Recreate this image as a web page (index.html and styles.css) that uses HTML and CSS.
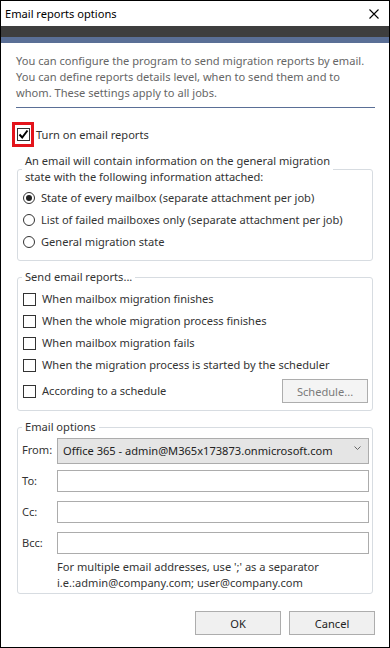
FILE: index.html
```html
<!DOCTYPE html>
<html lang="en">
<head>
    <meta charset="UTF-8">
    <meta name="viewport" content="width=device-width, initial-scale=1.0">
    <title>Email reports options</title>
    <link rel="stylesheet" href="styles.css">
</head>
<body>
    <div class="dialog">
        <div class="titlebar">
            <span>Email reports options</span>
            <svg class="close" width="10" height="10" viewBox="0 0 10 10">
                <path d="M0.5 0.5 L9.5 9.5 M9.5 0.5 L0.5 9.5" stroke="#000" stroke-width="1.1" fill="none"/>
            </svg>
        </div>
        <div class="banner"></div>
        <div class="content">
            <p class="intro">You can configure the program to send migration reports by email.<br>You can define reports details level, when to send them and to<br>whom. These settings apply to all jobs.</p>
            <hr class="sep">

            <label class="main-check">
                <span class="highlight">
                    <span class="box checked">
                        <svg width="11" height="11" viewBox="0 0 11 11">
                            <path d="M1.5 5.5 L4.2 8.5 L9.5 1.5" stroke="#000" stroke-width="2" fill="none"/>
                        </svg>
                    </span>
                </span>
                Turn on email reports
            </label>

            <fieldset class="group">
                <legend>An email will contain information on the general migration<br>state with the following information attached:</legend>
                <div class="options first">
                    <label class="option"><span class="radio selected"></span>State of every mailbox (separate attachment per job)</label>
                    <label class="option"><span class="radio"></span>List of failed mailboxes only (separate attachment per job)</label>
                    <label class="option"><span class="radio"></span>General migration state</label>
                </div>
            </fieldset>

            <fieldset class="group">
                <legend>Send email reports...</legend>
                <div class="options second">
                    <label class="option"><span class="box"></span>When mailbox migration finishes</label>
                    <label class="option"><span class="box"></span>When the whole migration process finishes</label>
                    <label class="option"><span class="box"></span>When mailbox migration fails</label>
                    <label class="option"><span class="box"></span>When the migration process is started by the scheduler</label>
                    <div class="option schedule-row">
                        <label class="option"><span class="box"></span>According to a schedule</label>
                        <button class="btn disabled" disabled>Schedule...</button>
                    </div>
                </div>
            </fieldset>

            <fieldset class="group">
                <legend>Email options</legend>
                <div class="mail-form">
                    <label class="field-label">From:</label>
                    <div class="select">
                        <span>Office 365 - admin@M365x173873.onmicrosoft.com</span>
                        <svg class="chevron" width="7" height="5" viewBox="0 0 7 5">
                            <path d="M0.5 0.5 L3.5 3.5 L6.5 0.5" stroke="#666" stroke-width="1" fill="none"/>
                        </svg>
                    </div>
                    <label class="field-label" for="to">To:</label>
                    <input type="text" id="to" class="text-input">
                    <label class="field-label" for="cc">Cc:</label>
                    <input type="text" id="cc" class="text-input">
                    <label class="field-label" for="bcc">Bcc:</label>
                    <input type="text" id="bcc" class="text-input">
                    <p class="hint">For multiple email addresses, use ';' as a separator<br>i.e.:admin@company.com; user@company.com</p>
                </div>
            </fieldset>

            <div class="actions">
                <button class="btn">OK</button>
                <button class="btn">Cancel</button>
            </div>
        </div>
    </div>
</body>
</html>
```

FILE: styles.css
```css
body {
    margin: 0;
    font-family: "Noto Sans", "Open Sans", sans-serif;
    font-size: 11.1px;
    color: #333;
    background: #fff;
}
.dialog {
    width: 390px;
    height: 648px;
    box-sizing: border-box;
    border: 1px solid #000;
    background: #fff;
    display: flex;
    flex-direction: column;
}
.titlebar {
    height: 25px;
    display: flex;
    align-items: center;
    justify-content: space-between;
    padding: 0 10px 0 4px;
    color: #000;
}
.banner {
    height: 11px;
    background: #3e3e3e;
    border-bottom: 6px solid #5a6f96;
}
.content {
    padding: 10px 14px 0 15px;
    line-height: 16px;
}
.intro {
    margin: 0;
    color: #666;
    white-space: nowrap;
}
.sep {
    margin: 6px 0 14px;
    border: 0;
    border-top: 1px solid #5a6f96;
    height: 0;
}
.main-check {
    display: flex;
    align-items: center;
    gap: 2px;
    margin-left: -4px;
}
.highlight {
    display: flex;
    border: 3px solid #e3141b;
    padding: 3px 1px 3px 2px;
}
.box {
    width: 13px;
    height: 13px;
    box-sizing: border-box;
    border: 1px solid #333;
    background: #fff;
    display: flex;
    align-items: center;
    justify-content: center;
    flex-shrink: 0;
}
.radio {
    width: 12px;
    height: 12px;
    box-sizing: border-box;
    border: 1px solid #333;
    border-radius: 50%;
    background: #fff;
    display: flex;
    align-items: center;
    justify-content: center;
    flex-shrink: 0;
}
.radio.selected::after {
    content: "";
    width: 6px;
    height: 6px;
    border-radius: 50%;
    background: #222;
}
.group {
    margin: 6px 2px 0 1px;
    padding: 0 3px 7px 4px;
    border: 1px solid #d7dce1;
    border-radius: 3px;
    min-width: 0;
}
.group + .group {
    margin-top: 8px;
}
.group legend {
    padding: 0 3px;
    white-space: nowrap;
}
.options {
    display: flex;
    flex-direction: column;
    padding-left: 1px;
}
.options.first {
    padding-top: 2px;
}
.options.second {
    padding-top: 3px;
}
.option {
    display: flex;
    align-items: center;
    gap: 6px;
    height: 22px;
    white-space: nowrap;
}
.schedule-row {
    justify-content: space-between;
    height: 24px;
    margin-top: 3px;
    padding-right: 1px;
}
.btn {
    font-family: inherit;
    font-size: 11.1px;
    color: #222;
    background: #f0f0f0;
    border: 1px solid #adadad;
    height: 24px;
    width: 86px;
    padding: 0;
}
.btn.disabled {
    color: #7a7a7a;
    background: #f4f4f4;
}
.mail-form {
    display: grid;
    grid-template-columns: 35px 312px;
    row-gap: 9px;
    align-items: center;
    padding-top: 3px;
}
.select {
    height: 26px;
    box-sizing: border-box;
    border: 1px solid #acacac;
    background: #e5e5e5;
    display: flex;
    align-items: center;
    justify-content: space-between;
    padding: 0 7px 0 5px;
    color: #222;
    white-space: nowrap;
    margin-bottom: -3px;
}
.chevron {
    margin-bottom: 6px;
}
.text-input {
    height: 22px;
    box-sizing: border-box;
    border: 1px solid #acacac;
    margin: 0;
    width: 100%;
}
.hint {
    grid-column: 2;
    margin: -4px 0 0;
    white-space: nowrap;
}
.group:last-of-type {
    padding-bottom: 2px;
}
.actions {
    display: flex;
    justify-content: flex-end;
    gap: 8px;
    margin-top: 17px;
}
```
